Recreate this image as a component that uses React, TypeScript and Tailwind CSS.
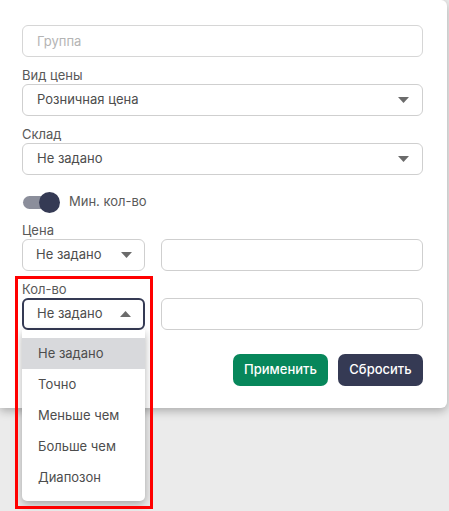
import { useState } from 'react';

const options = ['Не задано', 'Точно', 'Меньше чем', 'Больше чем', 'Диапозон'];

function Caret({ up = false }: { up?: boolean }) {
  return (
    <svg width="11" height="6" viewBox="0 0 11 6" className="shrink-0">
      {up ? <path d="M0 6 L5.5 0 L11 6 Z" fill="#6b6b6b" /> : <path d="M0 0 L11 0 L5.5 6 Z" fill="#6b6b6b" />}
    </svg>
  );
}

function Label({ children }: { children: string }) {
  return <div className="mt-[9px] h-[18px] text-[13px] leading-[18px] text-[#595959]">{children}</div>;
}

function Select({ value, wide = true, open = false }: { value: string; wide?: boolean; open?: boolean }) {
  return (
    <div
      className={`flex h-[32px] items-center justify-between rounded-[6px] bg-white text-[13px] text-[#4d4d4d] ${
        wide ? 'w-full pl-[14px] pr-[13px]' : 'w-[123px] pl-[13px] pr-[12px]'
      } ${open ? 'border-2 border-[#353a54]' : 'border border-[#cfcfcf]'}`}
    >
      <span>{value}</span>
      <Caret up={open} />
    </div>
  );
}

export default function App() {
  const [minQty, setMinQty] = useState(true);

  return (
    <div className="relative min-h-[511px] w-[449px] bg-[#ebebeb] font-['Inter','Noto_Sans',sans-serif]">
      <div className="flex h-[408px] w-[447px] flex-col rounded-r-[6px] bg-white pl-[22px] pr-[24px] pt-[25px] shadow-[0_3px_10px_rgba(0,0,0,0.28)]">
        <input
          placeholder="Группа"
          className="h-[32px] w-full rounded-[6px] border border-[#d6d6d6] pl-[14px] text-[13px] text-[#4d4d4d] outline-none placeholder:text-[#b4b4b4]"
        />
        <Label>Вид цены</Label>
        <Select value="Розничная цена" />
        <Label>Склад</Label>
        <Select value="Не задано" />

        <div className="mt-[17px] flex h-[20px] items-center gap-[9px]">
          <button onClick={() => setMinQty(!minQty)} className="relative h-[20px] w-[38px]">
            <span className="absolute left-[1px] top-[4px] h-[13px] w-[35px] rounded-full bg-[#8b8e9b]" />
            <span
              className={`absolute top-0 h-[21px] w-[21px] rounded-full bg-[#353a54] ${minQty ? 'left-[17px]' : 'left-0'}`}
            />
          </button>
          <span className="text-[13px] text-[#595959]">Мин. кол-во</span>
        </div>

        <Label>Цена</Label>
        <div className="flex gap-[16px]">
          <Select value="Не задано" wide={false} />
          <div className="h-[32px] flex-1 rounded-[6px] border border-[#cfcfcf]" />
        </div>

        <Label>Кол-во</Label>
        <div className="relative flex gap-[16px]">
          <Select value="Не задано" wide={false} open />
          <div className="h-[32px] flex-1 rounded-[6px] border border-[#cfcfcf]" />
          <div className="absolute left-0 top-[32px] z-10 w-[123px] rounded-b-[5px] bg-white py-[8px] shadow-[0_3px_8px_rgba(0,0,0,0.3)]">
            {options.map((o, i) => (
              <div
                key={o}
                className={`flex h-[31px] items-center pl-[16px] text-[13px] text-[#4d4d4d] ${i === 0 ? 'bg-[#d8d9dc]' : ''}`}
              >
                {o}
              </div>
            ))}
          </div>
        </div>

        <div className="mt-[24px] flex justify-end gap-[10px]">
          <button className="h-[32px] w-[95px] rounded-[7px] bg-[#07875b] text-[13px] font-medium text-white">
            Применить
          </button>
          <button className="h-[32px] w-[85px] rounded-[7px] bg-[#353a54] text-[13px] font-medium text-white">
            Сбросить
          </button>
        </div>
      </div>

      <div className="pointer-events-none absolute left-[15px] top-[276px] z-20 h-[233px] w-[138px] border-[3px] border-[#ff0000]" />
    </div>
  );
}
